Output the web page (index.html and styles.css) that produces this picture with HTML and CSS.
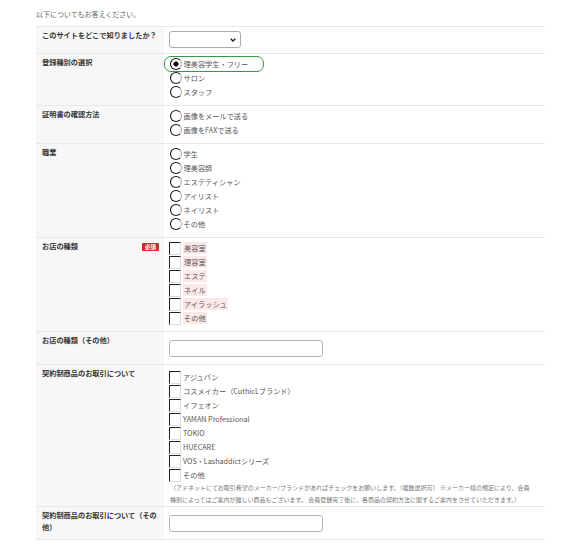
FILE: index.html
```html
<!DOCTYPE html>
<html lang="ja">
<head>
    <meta charset="UTF-8">
    <meta name="viewport" content="width=device-width, initial-scale=1.0">
    <title>アンケート</title>
    <link rel="stylesheet" href="styles.css">
</head>
<body>
    <div class="page">
        <p class="intro">以下についてもお答えください。</p>

        <div class="form-table">
            <div class="row">
                <div class="label">このサイトをどこで知りましたか？</div>
                <div class="field field-select">
                    <span class="select-wrap">
                        <select class="select" name="referrer">
                            <option></option>
                        </select>
                        <svg class="chevron" width="6" height="4" viewBox="0 0 6 4"><path d="M0.7 0.7 L3 3 L5.3 0.7" fill="none" stroke="#222" stroke-width="1.4"/></svg>
                    </span>
                </div>
            </div>

            <div class="row">
                <div class="label">登録種別の選択</div>
                <div class="field">
                    <label class="option marked"><input type="radio" class="radio" name="member_type" checked>理美容学生・フリー</label>
                    <label class="option"><input type="radio" class="radio" name="member_type">サロン</label>
                    <label class="option"><input type="radio" class="radio" name="member_type">スタッフ</label>
                </div>
            </div>

            <div class="row">
                <div class="label">証明書の確認方法</div>
                <div class="field">
                    <label class="option"><input type="radio" class="radio" name="proof">画像をメールで送る</label>
                    <label class="option"><input type="radio" class="radio" name="proof">画像をFAXで送る</label>
                </div>
            </div>

            <div class="row">
                <div class="label">職業</div>
                <div class="field">
                    <label class="option"><input type="radio" class="radio" name="job">学生</label>
                    <label class="option"><input type="radio" class="radio" name="job">理美容師</label>
                    <label class="option"><input type="radio" class="radio" name="job">エステティシャン</label>
                    <label class="option"><input type="radio" class="radio" name="job">アイリスト</label>
                    <label class="option"><input type="radio" class="radio" name="job">ネイリスト</label>
                    <label class="option"><input type="radio" class="radio" name="job">その他</label>
                </div>
            </div>

            <div class="row">
                <div class="label label-required">お店の種類<span class="badge">必須</span></div>
                <div class="field">
                    <label class="option"><input type="checkbox" class="check" name="shop"><span class="tag">美容室</span></label>
                    <label class="option"><input type="checkbox" class="check" name="shop"><span class="tag">理容室</span></label>
                    <label class="option"><input type="checkbox" class="check" name="shop"><span class="tag">エステ</span></label>
                    <label class="option"><input type="checkbox" class="check" name="shop"><span class="tag">ネイル</span></label>
                    <label class="option"><input type="checkbox" class="check" name="shop"><span class="tag">アイラッシュ</span></label>
                    <label class="option"><input type="checkbox" class="check" name="shop"><span class="tag">その他</span></label>
                </div>
            </div>

            <div class="row">
                <div class="label">お店の種類（その他）</div>
                <div class="field field-input">
                    <input type="text" class="text-input" name="shop_other">
                </div>
            </div>

            <div class="row">
                <div class="label">契約制商品のお取引について</div>
                <div class="field field-products">
                    <label class="option"><input type="checkbox" class="check" name="maker">アジュバン</label>
                    <label class="option"><input type="checkbox" class="check" name="maker">コスメイカー（CuthicLブランド）</label>
                    <label class="option"><input type="checkbox" class="check" name="maker">イフェオン</label>
                    <label class="option"><input type="checkbox" class="check" name="maker">YAMAN Professional</label>
                    <label class="option"><input type="checkbox" class="check" name="maker">TOKIO</label>
                    <label class="option"><input type="checkbox" class="check" name="maker">HUECARE</label>
                    <label class="option"><input type="checkbox" class="check" name="maker">VOS・Lashaddictシリーズ</label>
                    <label class="option"><input type="checkbox" class="check" name="maker">その他</label>
                    <p class="note">（アドネットにてお取引希望のメーカー/ブランドがあればチェックをお願いします。（複数選択可） ※メーカー様の規定により、会員<br>種別によってはご案内が難しい商品もございます。 会員登録完了後に、各商品の契約方法に関するご案内をさせていただきます。）</p>
                </div>
            </div>

            <div class="row">
                <div class="label">契約制商品のお取引について（その他）</div>
                <div class="field field-input">
                    <input type="text" class="text-input" name="maker_other">
                </div>
            </div>
        </div>
    </div>
</body>
</html>
```

FILE: styles.css
```css
body {
    margin: 0;
    font-family: "Noto Sans CJK JP", "Noto Sans", sans-serif;
    color: #555;
    background-color: #fff;
}

.page {
    width: 509px;
    padding: 9px 0 0 36px;
}

.intro {
    margin: 0 0 7px;
    font-size: 7px;
    line-height: 10px;
    color: #666;
}

.form-table {
    border-top: 1px solid #e8e8e8;
}

.row {
    display: grid;
    grid-template-columns: 128px 1fr;
    border-bottom: 1px solid #e8e8e8;
}

.label {
    background-color: #f7f7f7;
    padding: 2px 5px 4px 6px;
    font-size: 7.2px;
    line-height: 12px;
    font-weight: 700;
    color: #333;
}

.label-required {
    display: flex;
    justify-content: space-between;
    align-items: flex-start;
}

.badge {
    margin-top: 3px;
    padding: 0 3px;
    background-color: #e0232b;
    color: #fff;
    font-size: 5.5px;
    line-height: 8px;
    border-radius: 1px;
}

.field {
    padding: 3px 6px 6px;
    font-size: 7.2px;
    line-height: 14px;
}

.field-select {
    padding: 4px 6px 5px 5px;
}

.field-input {
    padding: 8px 6px 7px 5px;
}

.field-products {
    padding: 5px 6px 0;
}

.option {
    display: flex;
    align-items: center;
    height: 14px;
    cursor: pointer;
}

.option.marked {
    width: 93px;
    margin-left: -5px;
    padding-left: 5px;
    border-radius: 6px;
    outline: 1.5px solid #2f9c47;
}

.radio {
    appearance: none;
    width: 12px;
    height: 12px;
    margin: 0 2px 0 -0.5px;
    border: 1.7px solid;
    border-color: #111 #aaa #222 #000;
    border-radius: 50%;
    background-color: #fff;
}

.radio:checked {
    background: radial-gradient(circle, #111 0 2.3px, #fff 2.9px);
}

.check {
    appearance: none;
    width: 12px;
    height: 13px;
    margin: 0 2px 0 -1px;
    border-style: solid;
    border-width: 1.7px 1px 1px 1.7px;
    border-color: #222 #ddd #ddd #222;
    border-radius: 0;
    background-color: #fff;
}

.tag {
    padding: 0 1px;
    line-height: 12px;
    background-color: #fde8e8;
}

.select-wrap {
    position: relative;
    display: inline-block;
}

.select {
    appearance: none;
    display: block;
    width: 72px;
    height: 17px;
    border: 1px solid #aaa;
    border-radius: 3px;
    background-color: #fff;
}

.chevron {
    position: absolute;
    right: 5px;
    top: 7px;
}

.text-input {
    display: block;
    box-sizing: border-box;
    width: 154px;
    height: 17px;
    border: 1px solid #b5b5b5;
    border-radius: 3px;
    background-color: #fff;
}

.note {
    margin: 0;
    font-size: 6px;
    line-height: 12px;
    color: #777;
}
```
